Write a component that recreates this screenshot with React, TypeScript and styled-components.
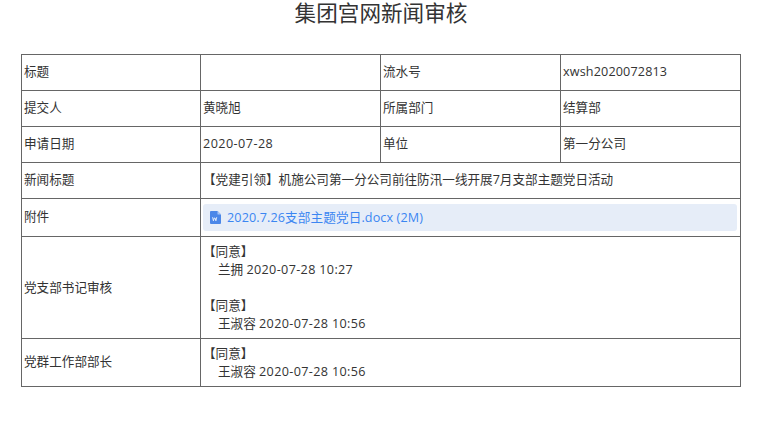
import React from "react";
import styled, { createGlobalStyle } from "styled-components";

const GlobalStyle = createGlobalStyle`
  html, body {
    margin: 0;
    padding: 0;
    background: #fff;
  }
  body {
    font-family: "Open Sans", "Noto Sans CJK SC", sans-serif;
    font-size: 12.6px;
    color: #333;
  }
`;

const Page = styled.div`
  width: 761px;
  height: 437px;
  overflow: hidden;
  padding-left: 21px;
  box-sizing: border-box;
`;
const Title = styled.h1`
  width: 720px;
  height: 33px;
  margin: 0 0 21px;
  font-size: 21.6px;
  font-weight: 400;
  line-height: 26px;
  text-align: center;
  color: #333;
`;
const Table = styled.table`
  width: 720px;
  table-layout: fixed;
  border-collapse: collapse;
`;
const Row = styled.tr<{ $height: number }>`
  height: ${(p) => p.$height}px;
`;
const Cell = styled.td<{ $flush?: boolean }>`
  border: 1px solid #666;
  padding: 0 2px ${(p) => (p.$flush ? 0 : 2)}px;
  box-sizing: border-box;
  line-height: 18px;
  vertical-align: middle;
`;
const Attachment = styled.div`
  display: flex;
  align-items: center;
  gap: 6px;
  height: 27px;
  margin: 2px 1px 0 0;
  padding-left: 7px;
  background: #e6edf8;
  border-radius: 3px;
`;
const FileLink = styled.a`
  color: #3b86f2;
  letter-spacing: 0.12px;
  text-decoration: none;
`;
const Approval = styled.div`
  & + & {
    margin-top: 18px;
  }
`;
const Signer = styled.div`
  padding-left: 15px;
`;
const Latin = styled.span<{ $spacing: number }>`
  letter-spacing: ${(p) => p.$spacing}px;
`;

const DocIcon = () => (
  <svg width="11" height="13" viewBox="0 0 11 13" aria-hidden="true">
    <path d="M1 0h6.5L11 3.5V12a1 1 0 0 1-1 1H1a1 1 0 0 1-1-1V1a1 1 0 0 1 1-1Z" fill="#4b87e8" />
    <path d="M7.5 0 11 3.5H8a.5.5 0 0 1-.5-.5Z" fill="#a9c6f5" />
    <path d="M2.6 6.2l.8 3.6.9-2.8h.7l.9 2.8.8-3.6" fill="none" stroke="#fff" strokeWidth=".8" />
  </svg>
);

const infoRows = [
  ["标题", "", "流水号", <Latin $spacing={0.15}>xwsh2020072813</Latin>],
  ["提交人", "黄晓旭", "所属部门", "结算部"],
  ["申请日期", <Latin $spacing={0.45}>2020-07-28</Latin>, "单位", "第一分公司"],
];

const ApprovalItem = ({ name, time }: { name: string; time: string }) => (
  <Approval>
    <div>【同意】</div>
    <Signer>
      {name} <Latin $spacing={0.35}>{time}</Latin>
    </Signer>
  </Approval>
);

export default function App() {
  return (
    <Page>
      <GlobalStyle />
      <Title>集团宫网新闻审核</Title>
      <Table>
        <colgroup>
          <col width="179" />
          <col width="180" />
          <col width="180" />
          <col width="180" />
        </colgroup>
        <tbody>
          {infoRows.map((row, r) => (
            <Row $height={36} key={r}>
              {row.map((text, i) => (
                <Cell key={i}>{text}</Cell>
              ))}
            </Row>
          ))}
          <Row $height={36}>
            <Cell>新闻标题</Cell>
            <Cell colSpan={3}>【党建引领】机施公司第一分公司前往防汛一线开展7月支部主题党日活动</Cell>
          </Row>
          <Row $height={38}>
            <Cell>附件</Cell>
            <Cell colSpan={3}>
              <Attachment>
                <DocIcon />
                <FileLink href="#">2020.7.26支部主题党日.docx (2M)</FileLink>
              </Attachment>
            </Cell>
          </Row>
          <Row $height={102}>
            <Cell $flush>党支部书记审核</Cell>
            <Cell $flush colSpan={3}>
              <ApprovalItem name="兰拥" time="2020-07-28 10:27" />
              <ApprovalItem name="王淑容" time="2020-07-28 10:56" />
            </Cell>
          </Row>
          <Row $height={48}>
            <Cell>党群工作部部长</Cell>
            <Cell $flush colSpan={3}>
              <ApprovalItem name="王淑容" time="2020-07-28 10:56" />
            </Cell>
          </Row>
        </tbody>
      </Table>
    </Page>
  );
}
